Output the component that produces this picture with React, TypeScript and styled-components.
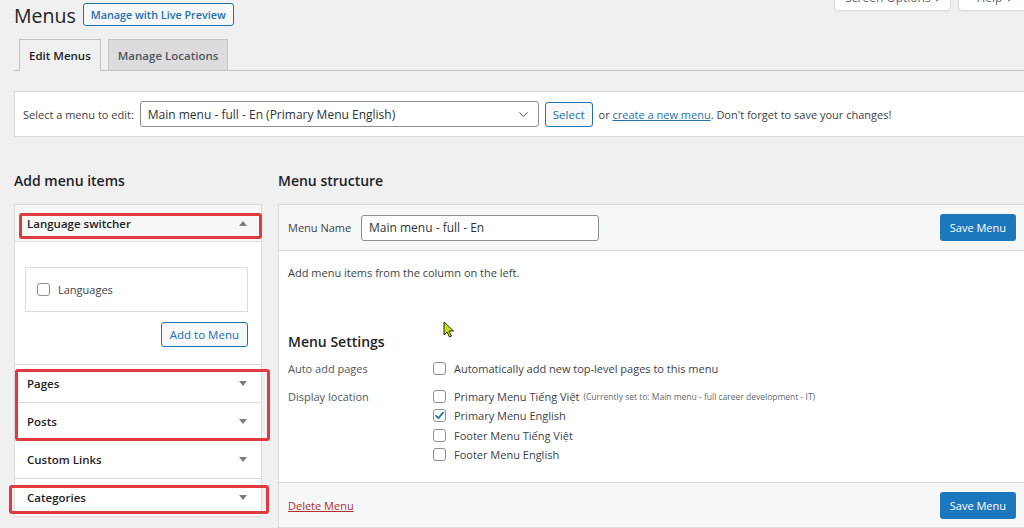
import React from 'react';
import styled, { createGlobalStyle } from 'styled-components';
import { ChevronDown } from 'lucide-react';

const GlobalStyle = createGlobalStyle`
  body {
    margin: 0;
    background: #f0f0f1;
    font-family: 'Open Sans', 'Noto Sans', sans-serif;
    font-size: 11px;
    color: #3c434a;
    overflow: hidden;
  }
`;

const Checkbox = ({ checked = false }: { checked?: boolean }) => (
  <Box>
    {checked && (
      <svg width="11" height="11" viewBox="0 0 11 11">
        <path d="M2 5.8 L4.4 8.2 L9 2.6" fill="none" stroke="#2271b1" strokeWidth="1.8" strokeLinecap="round" strokeLinejoin="round" />
      </svg>
    )}
  </Box>
);

const Section = ({ title, open = false, children }: { title: string; open?: boolean; children?: React.ReactNode }) => (
  <AccordionSection>
    <SectionTitle $open={open}>
      {title}
      <Arrow $up={open} />
    </SectionTitle>
    {open && children}
  </AccordionSection>
);

const locations = [
  { label: 'Primary Menu Tiếng Việt', note: '(Currently set to: Main menu - full career development - IT)' },
  { label: 'Primary Menu English', checked: true },
  { label: 'Footer Menu Tiếng Việt' },
  { label: 'Footer Menu English' },
];

export default function App() {
  return (
    <Page>
      <GlobalStyle />
      <ScreenMeta>
        <MetaTab $w={117}>Screen Options ▾</MetaTab>
        <MetaTab $w={72}>Help ▾</MetaTab>
      </ScreenMeta>
      <TitleRow>
        <Title>Menus</Title>
        <OutlineButton>Manage with Live Preview</OutlineButton>
      </TitleRow>
      <Tabs>
        <Tab $active>Edit Menus</Tab>
        <Tab>Manage Locations</Tab>
      </Tabs>
      <ManageBar>
        <span>Select a menu to edit:</span>
        <SelectBox>
          Main menu - full - En (Primary Menu English)
          <ChevronDown size={15} color="#50575e" strokeWidth={1.6} />
        </SelectBox>
        <SmallButton $pad={7}>Select</SmallButton>
        <span>
          or <BlueLink>create a new menu</BlueLink>. Don't forget to save your changes!
        </span>
      </ManageBar>
      <Columns>
        <LeftColumn>
          <Heading>Add menu items</Heading>
          <Accordion>
            <Section title="Language switcher" open>
              <SectionBody>
                <ItemBox>
                  <CheckRow>
                    <Checkbox />
                    Languages
                  </CheckRow>
                </ItemBox>
                <ButtonRow>
                  <SmallButton $pad={8}>Add to Menu</SmallButton>
                </ButtonRow>
              </SectionBody>
            </Section>
            <Section title="Pages" />
            <Section title="Posts" />
            <Section title="Custom Links" />
            <Section title="Categories" />
            <Highlight style={{ left: 4, top: 8, width: 243, height: 26 }} />
            <Highlight style={{ left: 0, top: 164, width: 255, height: 72 }} />
            <Highlight style={{ left: -6, top: 280, width: 260, height: 29 }} />
          </Accordion>
        </LeftColumn>
        <RightColumn>
          <Heading>Menu structure</Heading>
          <MenuPanel>
            <PanelHeader>
              <FieldLabel>Menu Name</FieldLabel>
              <TextInput>Main menu - full - En</TextInput>
              <PrimaryButton>Save Menu</PrimaryButton>
            </PanelHeader>
            <PanelBody>
              <Hint>Add menu items from the column on the left.</Hint>
              <SubHeading>
                Menu Settings
                <Cursor width="12" height="17" viewBox="0 0 12 17">
                  <path d="M1 1 L1 14 L4 11 L6.5 16 L8.5 15 L6 10 L10.5 10 Z" fill="#c5df1a" stroke="#2a2a00" strokeWidth="1" strokeLinejoin="round" />
                </Cursor>
              </SubHeading>
              <SettingRow>
                <SettingLabel>Auto add pages</SettingLabel>
                <Options>
                  <CheckRow>
                    <Checkbox />
                    Automatically add new top-level pages to this menu
                  </CheckRow>
                </Options>
              </SettingRow>
              <SettingRow>
                <SettingLabel>Display location</SettingLabel>
                <Options>
                  {locations.map((loc) => (
                    <CheckRow key={loc.label}>
                      <Checkbox checked={loc.checked} />
                      {loc.label}
                      {loc.note && <Note>{loc.note}</Note>}
                    </CheckRow>
                  ))}
                </Options>
              </SettingRow>
            </PanelBody>
            <PanelFooter>
              <DeleteLink>Delete Menu</DeleteLink>
              <PrimaryButton>Save Menu</PrimaryButton>
            </PanelFooter>
          </MenuPanel>
        </RightColumn>
      </Columns>
    </Page>
  );
}

const Page = styled.div`
  position: relative;
  width: 1012px;
  padding-left: 14px;
  height: 528px;
`;

const ScreenMeta = styled.div`
  position: absolute;
  top: -13px;
  left: 834px;
  display: flex;
  gap: 7px;
`;

const MetaTab = styled.div<{ $w: number }>`
  width: ${({ $w }) => $w}px;
  height: 24px;
  box-sizing: border-box;
  background: #fff;
  border: 1px solid #dcdcde;
  border-radius: 0 0 4px 4px;
  box-shadow: 0 1px 1px rgba(0, 0, 0, 0.04);
  color: #646970;
  font-size: 12px;
  text-align: center;
  line-height: 20px;
`;

const TitleRow = styled.div`
  display: flex;
  align-items: center;
  gap: 7px;
  height: 31px;
`;

const Title = styled.h1`
  margin: 0;
  font-size: 19.5px;
  font-weight: 400;
  color: #1d2327;
  line-height: 28px;
`;

const OutlineButton = styled.div`
  height: 23px;
  box-sizing: border-box;
  padding: 0 7px;
  border: 1px solid #2271b1;
  border-radius: 3px;
  background: #f6f7f7;
  color: #2271b1;
  font-size: 10.8px;
  font-weight: 600;
  line-height: 21px;
  margin-top: -2px;
`;

const Tabs = styled.div`
  display: flex;
  gap: 7px;
  padding-left: 5px;
  margin-top: 8px;
  border-bottom: 1px solid #c3c4c7;
  height: 31px;
`;

const Tab = styled.div<{ $active?: boolean }>`
  box-sizing: border-box;
  padding: 0 9px;
  border: 1px solid #c3c4c7;
  border-bottom: none;
  background: ${({ $active }) => ($active ? '#f0f0f1' : '#dcdcde')};
  color: ${({ $active }) => ($active ? '#1d2327' : '#50575e')};
  font-size: 11.5px;
  font-weight: 600;
  line-height: 31px;
  margin-bottom: ${({ $active }) => ($active ? '-1px' : '0')};
  height: ${({ $active }) => ($active ? '32px' : '31px')};
`;

const ManageBar = styled.div`
  margin-top: 20px;
  height: 46px;
  box-sizing: border-box;
  background: #fff;
  border: 1px solid #dcdcde;
  display: flex;
  align-items: center;
  gap: 6px;
  padding-left: 8px;
  color: #3c434a;
`;

const SelectBox = styled.div`
  width: 399px;
  height: 26px;
  box-sizing: border-box;
  border: 1px solid #8c8f94;
  border-radius: 3px;
  background: #fff;
  display: flex;
  align-items: center;
  justify-content: space-between;
  padding: 0 7px 0 7px;
  font-size: 12px;
  color: #2c3338;
`;

const SmallButton = styled.div<{ $pad: number }>`
  height: 25px;
  box-sizing: border-box;
  padding: 0 ${({ $pad }) => $pad}px;
  border: 1px solid #2271b1;
  border-radius: 3px;
  background: #f6f7f7;
  color: #2271b1;
  font-size: 11.5px;
  line-height: 23px;
`;

const BlueLink = styled.span`
  color: #2271b1;
  text-decoration: underline;
`;

const Columns = styled.div`
  display: flex;
  gap: 16px;
  margin-top: 32px;
`;

const LeftColumn = styled.div`
  width: 248px;
  flex-shrink: 0;
`;

const RightColumn = styled.div`
  flex: 1;
`;

const Heading = styled.h2`
  margin: 0;
  height: 35px;
  font-size: 14px;
  font-weight: 600;
  color: #1d2327;
  line-height: 24px;
`;

const Accordion = styled.div`
  position: relative;
  background: #fff;
  border: 1px solid #dcdcde;
`;

const AccordionSection = styled.div`
  & + & {
    border-top: 1px solid #dcdcde;
  }
`;

const SectionTitle = styled.div<{ $open?: boolean }>`
  height: 37px;
  box-sizing: border-box;
  display: flex;
  align-items: center;
  justify-content: space-between;
  padding: 0 14px 0 12px;
  background: ${({ $open }) => ($open ? '#f6f7f7' : '#fff')};
  border-bottom: ${({ $open }) => ($open ? '1px solid #dcdcde' : 'none')};
  font-size: 11.5px;
  font-weight: 600;
  color: #1d2327;
`;

const Arrow = styled.span<{ $up?: boolean }>`
  width: 0;
  height: 0;
  border-left: 4px solid transparent;
  border-right: 4px solid transparent;
  ${({ $up }) => ($up ? 'border-bottom: 5px solid #787c82;' : 'border-top: 5px solid #787c82;')}
`;

const SectionBody = styled.div`
  padding: 25px 13px 17px 10px;
`;

const ItemBox = styled.div`
  height: 45px;
  box-sizing: border-box;
  border: 1px solid #dcdcde;
  display: flex;
  align-items: center;
  padding-left: 11px;
`;

const ButtonRow = styled.div`
  display: flex;
  justify-content: flex-end;
  margin-top: 10px;
`;

const CheckRow = styled.label`
  display: flex;
  align-items: center;
  gap: 8px;
  font-size: 11px;
  color: #3c434a;
  height: 19.5px;
`;

const Box = styled.span`
  width: 13px;
  height: 13px;
  box-sizing: border-box;
  border: 1px solid #8c8f94;
  border-radius: 3px;
  background: #fff;
  display: inline-flex;
  align-items: center;
  justify-content: center;
  flex-shrink: 0;
`;

const Highlight = styled.div`
  position: absolute;
  box-sizing: border-box;
  border: 3px solid #e2383f;
  border-radius: 3px;
  pointer-events: none;
`;

const MenuPanel = styled.div`
  border: 1px solid #dcdcde;
  border-right: none;
  background: #fff;
`;

const PanelHeader = styled.div`
  height: 46px;
  box-sizing: border-box;
  background: #f6f7f7;
  border-bottom: 1px solid #dcdcde;
  display: flex;
  align-items: center;
  padding: 0 9px 0 9px;
`;

const FieldLabel = styled.span`
  width: 73px;
  font-size: 11px;
  color: #3c434a;
`;

const TextInput = styled.div`
  width: 238px;
  height: 26px;
  box-sizing: border-box;
  border: 1px solid #8c8f94;
  border-radius: 3px;
  background: #fff;
  padding: 0 7px;
  font-size: 12px;
  line-height: 24px;
  color: #2c3338;
`;

const PrimaryButton = styled.div`
  margin-left: auto;
  margin-right: 1px;
  height: 27px;
  box-sizing: border-box;
  padding: 0 10px;
  border-radius: 3px;
  background: #1d77bd;
  color: #fff;
  font-size: 11px;
  line-height: 27px;
`;

const PanelBody = styled.div`
  padding: 13px 9px 12px;
  height: 231px;
  box-sizing: border-box;
`;

const Hint = styled.p`
  margin: 0;
  font-size: 11px;
  line-height: 18px;
  color: #3c434a;
`;

const SubHeading = styled.h3`
  position: relative;
  margin: 49px 0 6px;
  font-size: 14px;
  font-weight: 600;
  color: #1d2327;
  line-height: 22px;
`;

const Cursor = styled.svg`
  position: absolute;
  left: 155px;
  top: -10px;
`;

const SettingRow = styled.div`
  display: flex;
  margin-bottom: 8px;
`;

const SettingLabel = styled.div`
  width: 145px;
  flex-shrink: 0;
  line-height: 19.5px;
  color: #50575e;
`;

const Options = styled.div`
  display: flex;
  flex-direction: column;
`;

const Note = styled.span`
  font-size: 8.5px;
  color: #646970;
  margin-left: -4px;
`;

const PanelFooter = styled.div`
  height: 44px;
  background: #f6f7f7;
  border-top: 1px solid #dcdcde;
  display: flex;
  align-items: center;
  padding: 0 9px;
`;

const DeleteLink = styled.span`
  color: #b32d2e;
  text-decoration: underline;
  font-size: 11px;
`;
